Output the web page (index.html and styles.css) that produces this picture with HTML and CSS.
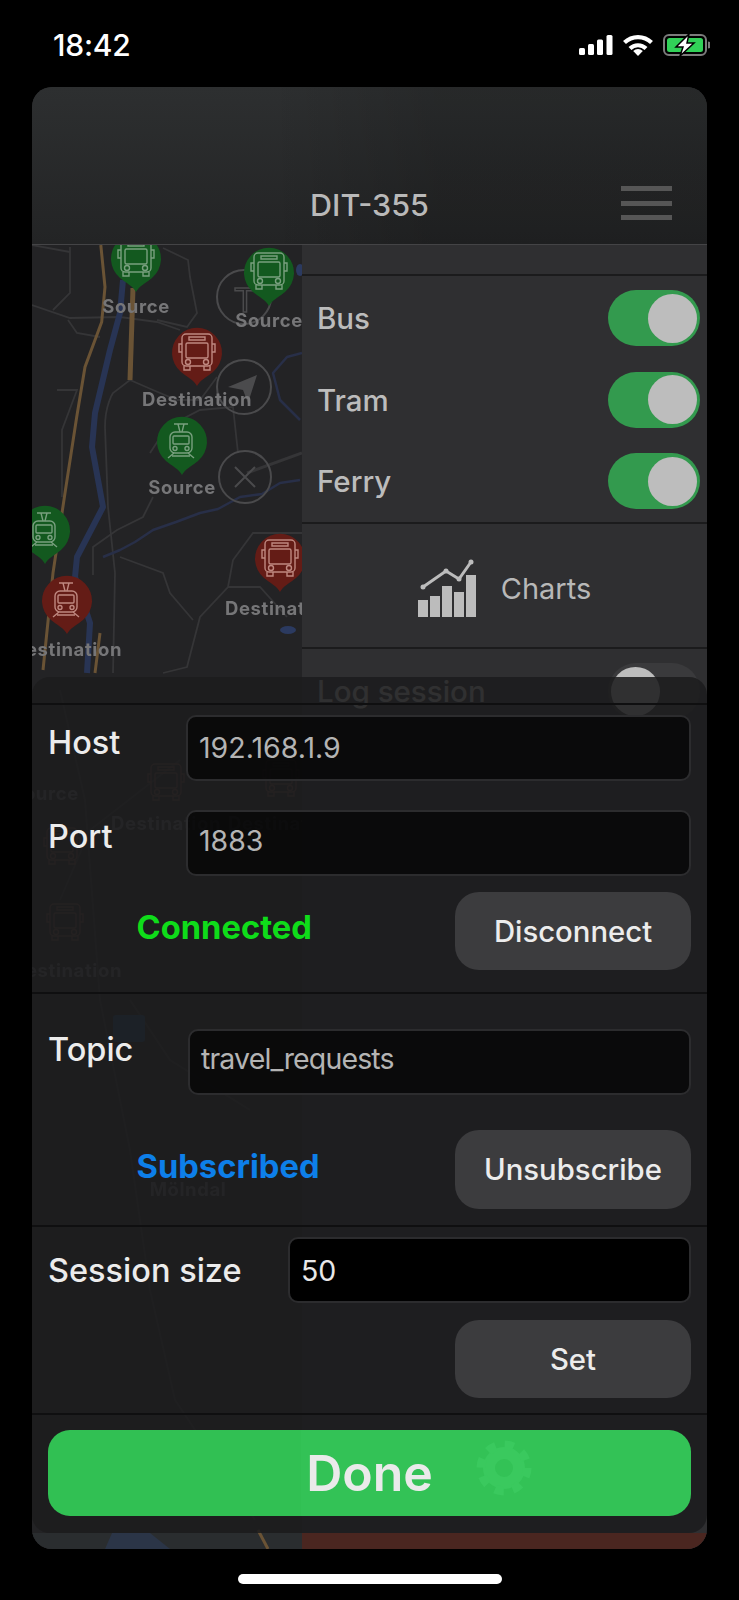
FILE: index.html
```html
<!DOCTYPE html>
<html lang="en">
<head>
<meta charset="utf-8">
<title>DIT-355</title>
<link rel="stylesheet" href="styles.css">
</head>
<body>
<div class="status">
  <span class="time">18:42</span>
  <div class="status-icons">
    <svg class="ic-signal" viewBox="0 0 34 20" width="34" height="20"><rect x="0" y="13" width="6" height="7" rx="1.5"/><rect x="9" y="9" width="6" height="11" rx="1.5"/><rect x="18" y="4.500" width="6" height="15.500" rx="1.500"/><rect x="27.500" y="0" width="6" height="20" rx="1.500"/></svg>
    <svg class="ic-wifi" viewBox="0 0 30 22" width="30" height="22"><path class="wifi-arc" d="M1.500 8.500a19.500 19.500 0 0 1 27 0"/><path class="wifi-arc" d="M7 14.500a11.500 11.500 0 0 1 16 0"/><path class="wifi-dot" d="M15 22l-4.800-5a7 7 0 0 1 9.600 0z"/></svg>
    <svg class="ic-batt" viewBox="0 0 47 22" width="47" height="22"><rect class="batt-shell" x="1" y="1" width="42" height="20" rx="5"/><rect class="batt-fill" x="4" y="4" width="36" height="14" rx="2.500"/><path class="batt-nub" d="M45 7.500a3.500 3.500 0 0 1 0 7z"/><path class="batt-bolt" d="M26 0 13 13h7l-3 9L31 9h-7z"/></svg>
  </div>
</div>

<main class="card">
  <header class="top">
    <span></span>
    <h1 class="title">DIT-355</h1>
    <div class="burger"><i></i><i></i><i></i></div>
  </header>

  <div class="stage">
    <div class="map">
      <svg class="map-svg" viewBox="32 245 270 1304" width="270" height="1304">
        <defs>
          <symbol id="pin" viewBox="-26 -26 52 60" overflow="visible">
            <path d="M0 33C-3 27-10 24-16 19A25 25 0 1 1 16 19C10 24 3 27 0 33z"/>
          </symbol>
          <g id="bus">
            <rect x="-15" y="-18" width="30" height="32" rx="4"/>
            <rect x="-11" y="-9" width="22" height="15" rx="1.500"/>
            <path d="M-8-15H8v3H-8zM-15-8h-3V0h3M15-8h3V0h-3M-13 14v4h6v-4M7 14v4h6v-4"/>
            <circle cx="-9" cy="10" r="2.500"/><circle cx="9" cy="10" r="2.500"/>
          </g>
          <g id="tram">
            <rect x="-11" y="-8" width="22" height="21" rx="5"/>
            <rect x="-8" y="-4" width="16" height="8" rx="1"/>
            <path d="M-7-16H7M-3-16l2 8M3-16l-2 8M-7 13l-6 5M7 13l6 5M-9 16H9"/>
            <circle cx="-6" cy="8.500" r="2"/><circle cx="6" cy="8.500" r="2"/>
          </g>
        </defs>

        <g class="road">
          <path d="M32 305 70 318 120 317 157 322 180 330"/>
          <path d="M70 247V293L53 310"/>
          <path d="M32 245 70 252"/>
          <path d="M68 320 77 333 100 337"/>
          <path d="M163 248 188 260 190 277 197 313 187 327 157 320"/>
          <path d="M105 427C105 405 113 393 113 393L130 380 153 390 177 400H200L217 377"/>
          <path d="M105 427 108 507 115 573 113 673"/>
          <path d="M57 390H77L62 430V497"/>
          <path d="M150 453 167 427 200 410 233 407 238 453"/>
          <path d="M153 497 143 517 117 530 93 547V575"/>
          <path class="road-wide" d="M247 473 302 453"/>
          <path d="M302 533H253L233 560 228 587 200 617 187 667 163 673"/>
          <path d="M120 557 163 573 170 593 193 620"/>
          <path d="M228 587H260L287 617"/>
          <path d="M60 690 85 800 100 1000 130 1150 150 1290 175 1400 255 1520"/>
          <path d="M180 760 90 830 60 900"/>
          <path d="M130 1000 170 1060 250 1110"/>
        </g>
        <path class="river" d="M123 280 120 313 110 350 95 413 92 447 103 507 77 557 75 577 90 623 87 673"/>
        <path class="creek" d="M103 557 120 550 135 542 153 530 176 522 200 513 218 509 240 497 262 494 280 483 300 480"/>
        <path class="creek" d="M300 420 280 400 273 373 287 357 302 353"/>
        <ellipse class="lake" cx="288" cy="630" rx="8" ry="4"/>
        <ellipse class="lake" cx="300" cy="270" rx="4" ry="6"/>
        <path class="orange" d="M100.800 245 105 287 101.700 322 85 367 76.700 417 65 493 53 573 43 670"/>
        <path class="orange orange-wide" d="M133 288 130 380"/>
        <path class="orange" d="M100 633 95 673"/>

        <g class="ctrl">
          <circle cx="244" cy="297" r="27"/>
          <circle cx="244" cy="387" r="27"/>
          <circle cx="245" cy="477" r="26"/>
          <path d="M235 467 255 487M255 467 235 487"/>
        </g>
        <text class="ctrl-t" x="245" y="312">T</text>
        <path class="ctrl-arrow" d="M257 375 228 387 243 390 248 403z"/>

        <use href="#pin" class="pin-g" x="110" y="233" width="52" height="60"/>
        <use href="#bus" class="glyph-g" x="136" y="258"/>
        <use href="#pin" class="pin-g" x="243" y="247" width="52" height="60"/>
        <use href="#bus" class="glyph-g" x="269" y="271"/>
        <use href="#pin" class="pin-r" x="171" y="327" width="52" height="60"/>
        <use href="#bus" class="glyph-r" x="197" y="352"/>
        <use href="#pin" class="pin-g" x="156" y="416" width="52" height="60"/>
        <use href="#tram" class="glyph-g" x="181" y="440"/>
        <use href="#pin" class="pin-g" x="19" y="505" width="52" height="60"/>
        <use href="#tram" class="glyph-g" x="44" y="529"/>
        <use href="#pin" class="pin-r" x="41" y="575" width="52" height="60"/>
        <use href="#tram" class="glyph-r" x="66" y="599"/>
        <use href="#pin" class="pin-r" x="254" y="533" width="52" height="60"/>
        <use href="#bus" class="glyph-r" x="280" y="558"/>

        <text class="pin-label" x="136" y="313">Source</text>
        <text class="pin-label" x="269" y="327">Source</text>
        <text class="pin-label" x="197" y="406">Destination</text>
        <text class="pin-label" x="182" y="494">Source</text>
        <text class="pin-label" x="67" y="656">Destination</text>
        <text class="pin-label" x="280" y="615">Destination</text>

        <use href="#bus" class="glyph-ghost" x="166" y="782"/>
        <use href="#bus" class="glyph-ghost" x="281" y="778"/>
        <use href="#bus" class="glyph-ghost" x="62" y="846"/>
        <use href="#bus" class="glyph-ghost" x="65" y="922"/>
        <text class="pin-label ghost" x="45" y="800">Source</text>
        <text class="pin-label ghost" x="166" y="830">Destination</text>
        <text class="pin-label ghost" x="283" y="830">Destination</text>
        <text class="pin-label ghost" x="67" y="977">Destination</text>
        <rect class="ghost-sign" x="113" y="1015" width="32" height="27" rx="3"/>
        <text class="pin-label ghost" x="188" y="1196">Mölndal</text>
        <rect class="map-strip" x="32" y="1533" width="270" height="16"/>
        <path class="orange" d="M258 1530 268 1549"/>
        <path class="strip-blue" d="M105 1549 112 1533H150L170 1549z"/>
      </svg>
    </div>

    <aside class="panel">
      <div class="panel-top"></div>
      <section class="toggles">
        <div class="toggle-row"><span class="panel-label">Bus</span><span class="switch on"><i></i></span></div>
        <div class="toggle-row"><span class="panel-label">Tram</span><span class="switch on"><i></i></span></div>
        <div class="toggle-row"><span class="panel-label">Ferry</span><span class="switch on"><i></i></span></div>
      </section>
      <section class="charts">
        <svg class="chart-icon" viewBox="417 558 58 60" width="58" height="60">
          <rect x="417" y="600" width="10" height="17"/><rect x="429" y="596" width="10" height="21"/><rect x="441" y="586" width="10" height="31"/><rect x="453" y="592" width="10" height="25"/><rect x="465" y="575" width="10" height="42"/>
          <path class="chart-line" d="M422 587 445 571 458 579 470 562"/>
          <circle cx="422" cy="587" r="2.500"/><circle cx="445" cy="571" r="2.500"/><circle cx="458" cy="579" r="2.500"/><circle cx="470" cy="562" r="2.500"/>
        </svg>
        <span class="charts-label">Charts</span>
      </section>
      <section class="log">
        <span class="panel-label">Log session</span><span class="switch off"><i></i></span>
      </section>
      <div class="panel-tail"></div>
    </aside>
  </div>

  <div class="sheet">
    <div class="sheet-head"></div>
    <section class="block block-conn">
      <div class="row"><label class="label label-host">Host</label><div class="field">192.168.1.9</div></div>
      <div class="row"><label class="label label-port">Port</label><div class="field field-lift">1883</div></div>
      <div class="action"><span class="state state-green">Connected</span><button class="btn">Disconnect</button></div>
    </section>
    <section class="block block-topic">
      <div class="row row-topic"><label class="label label-topic">Topic</label><div class="field field-tight">travel_requests</div></div>
      <div class="action"><span class="state state-blue">Subscribed</span><button class="btn btn-tall">Unsubscribe</button></div>
    </section>
    <section class="block block-size">
      <div class="row row-size"><label class="label">Session size</label><div class="field field-active">50</div></div>
      <div class="action action-end"><button class="btn">Set</button></div>
    </section>
    <div class="done-wrap">
      <button class="done">
        <svg class="gear" viewBox="-28 -28 56 56" width="56" height="56"><circle class="gear-ring" r="15"/><circle class="gear-teeth" r="23"/></svg>
        <span class="done-label">Done</span>
      </button>
    </div>
  </div>
</main>
<div class="home-wrap"><div class="home"></div></div>
</body>
</html>
```

FILE: styles.css
```css
* { box-sizing: border-box; }
html, body { margin: 0; padding: 0; background: #000; }
body {
  width: 739px;
  height: 1600px;
  overflow: hidden;
  font-family: Inter, "Liberation Sans", sans-serif;
  color: #fff;
}

/* status bar */
.status {
  height: 87px;
  padding: 3px 29px 0 53px;
  display: flex;
  align-items: center;
  justify-content: space-between;
}
.time { font-size: 30px; font-weight: 500; letter-spacing: -.2px; color: #fff; }
.status-icons { display: flex; align-items: center; gap: 10px; }
.ic-signal rect { fill: #fff; }
.wifi-arc { fill: none; stroke: #fff; stroke-width: 4.2; }
.wifi-dot { fill: #fff; }
.batt-shell { fill: none; stroke: #7b7b7b; stroke-width: 2; }
.batt-fill { fill: #31d158; }
.batt-nub { fill: #7b7b7b; }
.batt-bolt { fill: #fff; stroke: #000; stroke-width: 1.500; }

/* card */
.card {
  position: relative;
  width: 675px;
  height: 1462px;
  margin: 0 32px;
  border-radius: 20px;
  overflow: hidden;
  display: flex;
  flex-direction: column;
  background: #242426;
}
.top {
  height: 158px;
  flex: none;
  padding-top: 88px;
  display: grid;
  grid-template-columns: 1fr auto 1fr;
  align-items: start;
  background:
    linear-gradient(to right, rgba(0, 0, 0, 0) 35%, rgba(0, 0, 0, .14) 60%),
    linear-gradient(to bottom, #2d2f30, #232425);
  border-bottom: 1px solid #444446;
}
.title {
  margin: 0;
  height: 60px;
  line-height: 60px;
  font-size: 30.500px;
  font-weight: 500;
  color: #b9b9b9;
}
.burger {
  justify-self: end;
  margin-right: 35px;
  padding-top: 11px;
  display: flex;
  flex-direction: column;
  gap: 9.500px;
}
.burger i { display: block; width: 51px; height: 5px; background: #565656; }

.stage { flex: 1; display: flex; min-height: 0; }
.map { width: 270px; flex: none; background: #232325; overflow: hidden; }
.map-svg { display: block; filter: blur(.55px); }

/* map paint */
.road path { fill: none; stroke: #353537; stroke-width: 1.800; }
.road .road-wide { stroke-width: 3; }
.river { fill: none; stroke: #283454; stroke-width: 6; stroke-linejoin: round; }
.creek { fill: none; stroke: #282f48; stroke-width: 2.500; stroke-linejoin: round; }
.lake { fill: #2b3a60; }
.orange { fill: none; stroke: #6a5335; stroke-width: 3; }
.orange-wide { stroke-width: 5; }
.ctrl circle, .ctrl path { fill: none; stroke: #4a4a4c; stroke-width: 2; }
.ctrl-t { font-family: "Liberation Sans", sans-serif; font-size: 35px; fill: none; stroke: #4a4a4c; stroke-width: 1.500; text-anchor: middle; }
.ctrl-arrow { fill: #4b4b4d; }
.pin-g { fill: #13591f; }
.pin-r { fill: #641c16; }
.glyph-g, .glyph-r, .glyph-ghost { fill: none; stroke-width: 1.400; }
.glyph-g { stroke: #79a07f; }
.glyph-r { stroke: #bf8880; }
.glyph-ghost { stroke: #5f4038; }
.pin-label {
  font-family: Inter, "Liberation Sans", sans-serif;
  font-size: 18.500px;
  font-weight: 700;
  letter-spacing: .6px;
  fill: #767678;
  text-anchor: middle;
}
.pin-label.ghost { fill: #5e5e60; }
.ghost-sign { fill: #1c4468; }
.map-strip { fill: #2a2d2f; }
.strip-blue { fill: #2b3547; }

/* side panel */
.panel { flex: 1; display: flex; flex-direction: column; background: #2f2f31; }
.panel-top { height: 31px; flex: none; border-bottom: 2px solid #1b1b1c; }
.toggles {
  flex: none;
  height: 248px;
  padding: 14px 7px 0 15px;
  display: flex;
  flex-direction: column;
  gap: 25.500px;
  border-bottom: 2px solid #1b1b1c;
}
.toggle-row { height: 56px; display: flex; align-items: center; justify-content: space-between; }
.panel-label { font-size: 29.500px; font-weight: 500; color: #bcbcbc; }
.switch {
  width: 92px;
  height: 56px;
  padding: 0 3px;
  border-radius: 28px;
  display: flex;
  align-items: center;
}
.switch i { display: block; width: 49px; height: 49px; border-radius: 50%; background: #bdbdbd; }
.switch.on { background: #339a4e; justify-content: flex-end; }
.switch.off { background: #3a3a3c; justify-content: flex-start; }
.charts {
  flex: none;
  height: 125px;
  padding-top: 5px;
  display: flex;
  align-items: center;
  justify-content: center;
  gap: 25px;
  border-bottom: 2px solid #1b1b1c;
}
.chart-icon rect, .chart-icon circle { fill: #bcbcbc; }
.chart-line { fill: none; stroke: #bcbcbc; stroke-width: 3; }
.charts-label { font-size: 29px; font-weight: 400; color: #b8b8b8; }
.log {
  flex: 1;
  padding: 14px 7px 0 15px;
  display: flex;
  align-items: flex-start;
  justify-content: space-between;
}
.log .panel-label { line-height: 57px; }
.panel-tail { height: 16px; flex: none; background: #4a2620; }

/* translucent sheet over the map */
.sheet {
  position: absolute;
  left: 0;
  right: 0;
  top: 590px;
  height: 856px;
  border-radius: 18px;
  background: rgba(28, 28, 30, .88);
  display: flex;
  flex-direction: column;
}
.sheet-head { height: 28px; flex: none; border-bottom: 2px solid #0f0f10; }
.block { flex: none; padding: 0 16px; display: flex; flex-direction: column; border-bottom: 2px solid #0f0f10; }
.block-conn { padding-top: 10px; gap: 29px; height: 289px; }
.block-conn .action { margin-top: -13px; }
.block-topic { padding-top: 35px; gap: 35px; height: 233px; }
.block-size { padding-top: 10px; gap: 17px; height: 188px; }
.row { height: 66px; display: grid; grid-template-columns: 138px 1fr; align-items: center; }
.row-topic { grid-template-columns: 140px 1fr; }
.row-size { grid-template-columns: 240px 1fr; }
.label { font-size: 32.500px; font-weight: 500; color: #ececec; }
.label-host { padding-bottom: 11px; }
.label-port { padding-bottom: 13px; }
.label-topic { padding-bottom: 26px; }
.field {
  height: 100%;
  padding: 0 0 2px 11px;
  display: flex;
  align-items: center;
  background: rgba(0, 0, 0, .65);
  border: 2px solid #2c2c2e;
  border-radius: 10px;
  font-size: 28.500px;
  font-weight: 400;
  color: #b4b4b4;
}
.field-lift { padding-bottom: 5px; }
.field-tight { letter-spacing: -.85px; padding-bottom: 7px; }
.field-active { background: #000; color: #e8e8e8; padding-bottom: 0; }
.action { display: flex; align-items: center; justify-content: space-between; padding-left: 88.500px; }
.action-end { justify-content: flex-end; }
.state { font-size: 32.700px; font-weight: 700; padding-bottom: 8px; }
.state-green { color: #0fdc1a; }
.state-blue { color: #0d7fe9; }
.btn {
  width: 236px;
  height: 78px;
  padding: 0;
  border: 0;
  border-radius: 24px;
  background: #3c3c3e;
  font-family: inherit;
  font-size: 29.300px;
  font-weight: 500;
  color: #ececec;
}
.btn-tall { height: 79px; }
.done-wrap { flex: 1; padding: 15px 16px 17px; }
.done {
  position: relative;
  width: 100%;
  height: 86px;
  padding: 0;
  border: 0;
  border-radius: 22px;
  background: linear-gradient(to right, #31c053 253px, #33c256 253px);
  font-family: inherit;
}
.done-label { position: relative; font-size: 50px; font-weight: 600; color: #eaeaea; }
.gear { position: absolute; left: 427.500px; top: 10px; }
.gear-ring { fill: none; stroke: #3ac95e; stroke-width: 12; }
.gear-teeth { fill: none; stroke: #3ac95e; stroke-width: 9; stroke-dasharray: 9 9.060; }

/* home indicator */
.home-wrap { padding-top: 25px; display: flex; justify-content: center; }
.home { width: 264px; height: 10px; border-radius: 5px; background: #fff; }
```
